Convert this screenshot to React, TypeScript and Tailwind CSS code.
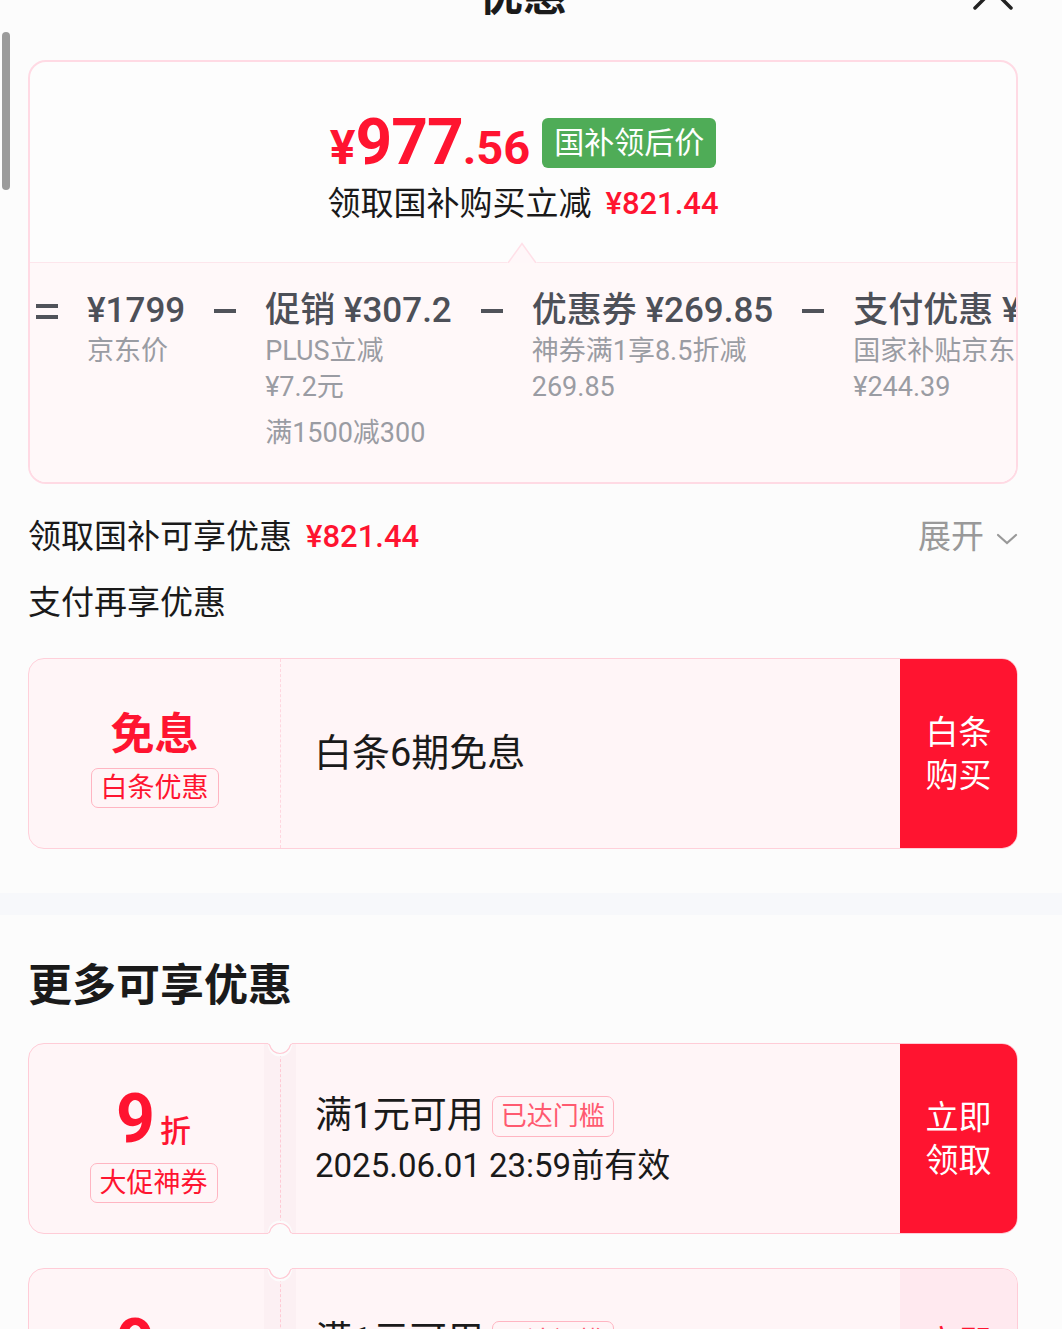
import React from 'react';

const Notch = ({ bottom }: { bottom?: boolean }) => (
  <svg
    width="24"
    height="14"
    viewBox="0 0 24 14"
    className={`absolute left-[240px] ${bottom ? 'bottom-0 rotate-180' : 'top-0'}`}
  >
    <path d="M0 0 L0 1.5 A12 12 0 0 0 24 1.5 L24 0 Z" fill="#fcfcfc" />
    <path d="M0 1 Q1.5 1 1.8 2.5 A10.5 10.5 0 0 0 22.2 2.5 Q22.5 1 24 1" fill="none" stroke="#ffc9d4" strokeWidth="1.2" />
  </svg>
);

const Badge = ({ text, light }: { text: string; light?: boolean }) => (
  <div
    className={`flex items-center rounded-[7px] border border-[#ffb5c2] leading-none ${
      light ? 'h-[41px] px-[8px] text-[26px] text-[#ff5a70]' : 'h-[40px] px-[9px] text-[27px] text-[#ff1430]'
    }`}
  >
    {text}
  </div>
);

const Coupon = ({ faded }: { faded?: boolean }) => (
  <div className="relative h-[191px]">
    <div className="h-full flex rounded-[16px] border border-[#ffccd7] bg-[#fff5f7] overflow-hidden">
      <div className="w-[235px] pl-[14px] flex flex-col items-center pt-[41px]">
        <div className="h-[68px] flex items-baseline text-[#ff1430] font-bold leading-[68px]">
          <span className="text-[68px]">9</span>
          <span className="text-[31px] ml-[5px] font-medium">折</span>
        </div>
        <div className="mt-[10px]">
          <Badge text="大促神券" />
        </div>
      </div>
      <div className="w-[32px] flex justify-center bg-[#fcf0f3]">
        <div className="h-full border-l-[1.5px] border-dashed border-[#ffc9d4]" />
      </div>
      <div className="flex-1 pl-[19px] pt-[50px]">
        <div className="h-[44px] flex items-center gap-[8px]">
          <span className="text-[37px]">满1元可用</span>
          <Badge text="已达门槛" light />
        </div>
        <div className="mt-[6px] text-[33px] leading-[44px]">2025.06.01 23:59前有效</div>
      </div>
      <div
        className={`w-[117px] flex flex-col items-center justify-center text-[33px] leading-[43px] ${
          faded ? 'bg-[#ffe9ef] text-[#ff1430]' : 'bg-[#ff1430] text-white'
        }`}
      >
        <span>立即</span>
        <span>领取</span>
      </div>
    </div>
    <Notch />
    <Notch bottom />
  </div>
);

const Op = ({ eq }: { eq?: boolean }) => (
  <div className="h-[40px] w-[22px] flex flex-col justify-center gap-[7px] shrink-0">
    <div className="h-[4px] bg-[#50535a]" />
    {eq && <div className="h-[4px] bg-[#50535a]" />}
  </div>
);

const Col = ({ head, subs, extra }: { head: string; subs: string[]; extra?: string }) => (
  <div className="shrink-0">
    <div className="text-[35px] leading-[40px] font-medium text-[#4d5058]">{head}</div>
    <div className="mt-[2px] text-[27px] leading-[36px] text-[#9a9ca3]">
      {subs.map(s => (
        <div key={s}>{s}</div>
      ))}
      {extra && <div className="mt-[10px]">{extra}</div>}
    </div>
  </div>
);

export default function App() {
  return (
    <div className="relative min-h-[1329px] bg-[#fcfcfc] text-[#1a1a1a] font-['Roboto','Noto_Sans_CJK_SC',sans-serif] overflow-hidden">
      <div className="absolute left-[2px] top-[32px] w-[8px] h-[158px] rounded-full bg-[#9b9b9b]" />

      <div className="pl-[28px] pr-[44px]">
        {/* header */}
        <div className="relative h-[60px] flex flex-col">
          <div className="-mt-[32px] h-[56px] flex items-center justify-center text-[44px] font-bold">优惠</div>
          <svg width="44" height="44" viewBox="0 0 44 44" className="absolute left-[943px] top-[-32px]">
            <path d="M4 4 L40 40 M40 4 L4 40" stroke="#222" strokeWidth="3.5" strokeLinecap="round" />
          </svg>
        </div>

        {/* price card */}
        <div className="rounded-[18px] border-2 border-[#ffdae4] bg-[#fdfdfd] overflow-hidden">
          <div className="relative h-[200px] flex flex-col items-center pt-[54px]">
            <div className="flex items-center gap-[12px] h-[54px]">
              <span className="text-[#ff1430] font-bold leading-none">
                <span className="text-[48px]">¥</span>
                <span className="text-[64px] tracking-[-1px]">977</span>
                <span className="text-[47px]">.56</span>
              </span>
              <div className="h-[50px] px-[12px] flex items-center rounded-[6px] bg-[#4fac57] text-white text-[30px] leading-none">
                国补领后价
              </div>
            </div>
            <div className="mt-[14px] flex items-center text-[33px] leading-[40px]">
              <span>领取国补购买立减</span>
              <span className="ml-[14px] text-[31px] font-medium text-[#ff1430]">¥821.44</span>
            </div>
            <svg width="30" height="21" viewBox="0 0 30 21" className="absolute bottom-[-1px] left-[477px]">
              <path d="M0 21 L15 1 L30 21 Z" fill="#fff7f9" />
              <path d="M1 21 L15 1.5 L29 21" fill="none" stroke="#ffe0e8" strokeWidth="1.5" />
            </svg>
          </div>
          <div className="h-[220px] border-t border-[#fde6ec] bg-[#fff8f9] pl-[6px] pt-[28px] flex items-start gap-[29px] whitespace-nowrap">
            <Op eq />
            <Col head="¥1799" subs={['京东价']} />
            <Op />
            <Col head="促销 ¥307.2" subs={['PLUS立减', '¥7.2元']} extra="满1500减300" />
            <Op />
            <Col head="优惠券 ¥269.85" subs={['神券满1享8.5折减', '269.85']} />
            <Op />
            <Col head="支付优惠 ¥244.39" subs={['国家补贴京东补贴', '¥244.39']} />
          </div>
        </div>

        <div className="mt-[20px] h-[66px] flex items-center justify-between text-[33px]">
          <div className="flex items-center">
            <span>领取国补可享优惠</span>
            <span className="ml-[14px] text-[31px] font-medium text-[#ff1430]">¥821.44</span>
          </div>
          <div className="flex items-center text-[#999]">
            <span>展开</span>
            <svg width="22" height="14" viewBox="0 0 22 14" className="ml-[12px] mt-[4px]">
              <path d="M2 3 L11 11 L20 3" fill="none" stroke="#999" strokeWidth="2.2" strokeLinecap="round" />
            </svg>
          </div>
        </div>
        <div className="h-[66px] flex items-center text-[33px]">支付再享优惠</div>

        {/* baitiao card */}
        <div className="mt-[22px] h-[191px] flex rounded-[16px] border border-[#ffd0da] bg-[#fff5f7] overflow-hidden">
          <div className="w-[252px] flex flex-col items-center pt-[50px] border-r border-dashed border-[#ffd6df]">
            <div className="text-[44px] leading-[52px] font-bold text-[#ff1430]">免息</div>
            <div className="mt-[7px]">
              <Badge text="白条优惠" />
            </div>
          </div>
          <div className="flex-1 pl-[33px] flex items-center text-[38px]">白条6期免息</div>
          <div className="w-[117px] bg-[#ff1430] text-white flex flex-col items-center justify-center text-[33px] leading-[43px]">
            <span>白条</span>
            <span>购买</span>
          </div>
        </div>
      </div>

      <div className="mt-[44px] h-[22px] bg-[#f7f8fb]" />

      <div className="pl-[28px] pr-[44px]">
        <div className="h-[128px] pt-[47px] text-[44px] leading-[48px] font-bold">更多可享优惠</div>
        <Coupon />
        <div className="mt-[34px]">
          <Coupon faded />
        </div>
      </div>
    </div>
  );
}
